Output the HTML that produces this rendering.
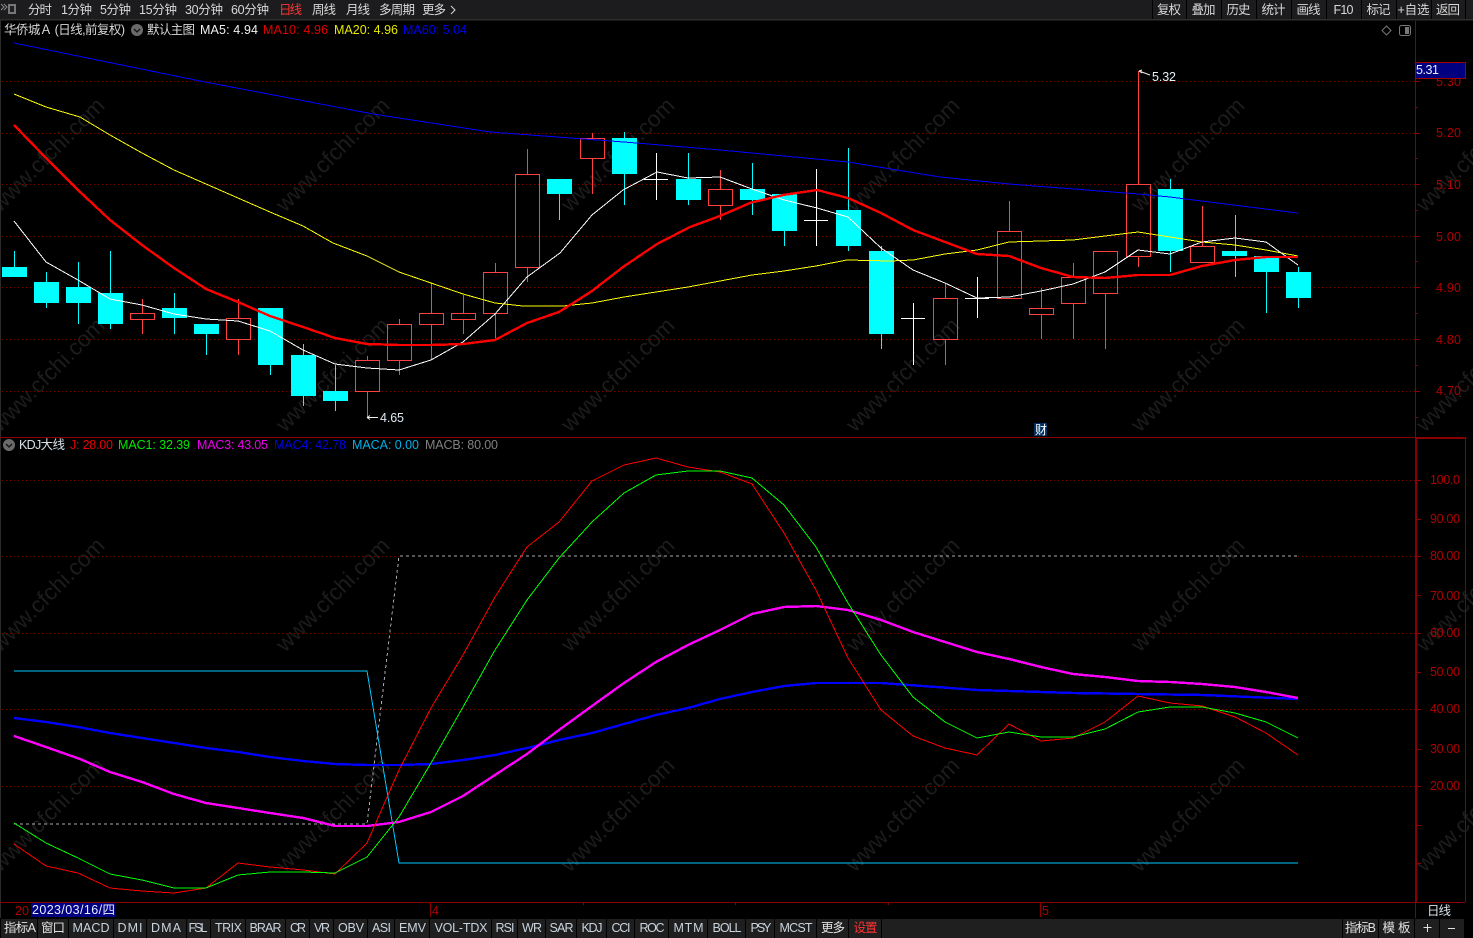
<!DOCTYPE html>
<html lang="zh"><head><meta charset="utf-8"><title>K线图</title>
<style>
html,body{margin:0;padding:0;background:#000;width:1473px;height:938px;overflow:hidden}
svg{display:block;position:absolute;left:0;top:0}
text{font-family:"Liberation Sans","Noto Sans CJK SC",sans-serif;font-size:12.5px}
.wm text{font-size:22.5px;fill:#1c1c1c}
.ax text{fill:#b00000}
.tb text{fill:#d8d8d8;text-anchor:middle}
.bb text{fill:#c9d3de;text-anchor:middle}
polyline{shape-rendering:crispEdges}
</style></head><body>
<svg width="1473" height="938" viewBox="0 0 1473 938" xmlns="http://www.w3.org/2000/svg">
<rect width="1473" height="938" fill="#000"/>
<g class="wm">
<text x="0" y="213" transform="rotate(-45 0 213)" textLength="150">www.cfchi.com</text>
<text x="285" y="213" transform="rotate(-45 285 213)" textLength="150">www.cfchi.com</text>
<text x="570" y="213" transform="rotate(-45 570 213)" textLength="150">www.cfchi.com</text>
<text x="855" y="213" transform="rotate(-45 855 213)" textLength="150">www.cfchi.com</text>
<text x="1140" y="213" transform="rotate(-45 1140 213)" textLength="150">www.cfchi.com</text>
<text x="1425" y="213" transform="rotate(-45 1425 213)" textLength="150">www.cfchi.com</text>
<text x="0" y="433" transform="rotate(-45 0 433)" textLength="150">www.cfchi.com</text>
<text x="285" y="433" transform="rotate(-45 285 433)" textLength="150">www.cfchi.com</text>
<text x="570" y="433" transform="rotate(-45 570 433)" textLength="150">www.cfchi.com</text>
<text x="855" y="433" transform="rotate(-45 855 433)" textLength="150">www.cfchi.com</text>
<text x="1140" y="433" transform="rotate(-45 1140 433)" textLength="150">www.cfchi.com</text>
<text x="1425" y="433" transform="rotate(-45 1425 433)" textLength="150">www.cfchi.com</text>
<text x="0" y="653" transform="rotate(-45 0 653)" textLength="150">www.cfchi.com</text>
<text x="285" y="653" transform="rotate(-45 285 653)" textLength="150">www.cfchi.com</text>
<text x="570" y="653" transform="rotate(-45 570 653)" textLength="150">www.cfchi.com</text>
<text x="855" y="653" transform="rotate(-45 855 653)" textLength="150">www.cfchi.com</text>
<text x="1140" y="653" transform="rotate(-45 1140 653)" textLength="150">www.cfchi.com</text>
<text x="1425" y="653" transform="rotate(-45 1425 653)" textLength="150">www.cfchi.com</text>
<text x="0" y="873" transform="rotate(-45 0 873)" textLength="150">www.cfchi.com</text>
<text x="285" y="873" transform="rotate(-45 285 873)" textLength="150">www.cfchi.com</text>
<text x="570" y="873" transform="rotate(-45 570 873)" textLength="150">www.cfchi.com</text>
<text x="855" y="873" transform="rotate(-45 855 873)" textLength="150">www.cfchi.com</text>
<text x="1140" y="873" transform="rotate(-45 1140 873)" textLength="150">www.cfchi.com</text>
<text x="1425" y="873" transform="rotate(-45 1425 873)" textLength="150">www.cfchi.com</text>
</g>

<!-- grid -->
<path d="M2 81.5H1415M2 133.5H1415M2 184.5H1415M2 236.5H1415M2 287.5H1415M2 339.5H1415M2 391.5H1415M2 480.5H1415M2 556.5H399M1298 556.5H1415M2 633.5H1415M2 709.5H1415M2 786.5H1415" stroke="#7a0000" stroke-width="1" stroke-dasharray="1 3" fill="none" shape-rendering="crispEdges"/>

<!-- frame -->
<path d="M0.5 20V918" stroke="#2c2c2c" fill="none" shape-rendering="crispEdges"/>
<path d="M0 437.5H1465M0 902.5H1465M1415.5 21V918M1465.5 437V902" stroke="#8a0000" fill="none" shape-rendering="crispEdges"/>
<path d="M1416.5 437V902M1415 438.5H1465" stroke="#8a0000" fill="none" shape-rendering="crispEdges"/>
<path d="M1415 81.5h5M1415 107.5h3M1415 133.5h5M1415 158.5h3M1415 184.5h5M1415 210.5h3M1415 236.5h5M1415 261.5h3M1415 287.5h5M1415 313.5h3M1415 339.5h5M1415 365.5h3M1415 391.5h5M1415 417.5h3M1415 480.5h6M1415 519.5h6M1415 556.5h6M1415 595.5h6M1415 633.5h6M1415 672.5h6M1415 709.5h6M1415 749.5h6M1415 786.5h6M1415 825.5h6M1415 863.5h6M583.5 902v3M735.5 902v3M888.5 902v3M430.5 903v14M1040.5 903v14" stroke="#8a0000" fill="none" shape-rendering="crispEdges"/>

<!-- axis labels -->
<g class="ax">
<text x="1436" y="86" textLength="25">5.30</text>
<text x="1436" y="137" textLength="25">5.20</text>
<text x="1436" y="189" textLength="25">5.10</text>
<text x="1436" y="241" textLength="25">5.00</text>
<text x="1436" y="292" textLength="25">4.90</text>
<text x="1436" y="344" textLength="25">4.80</text>
<text x="1436" y="395" textLength="25">4.70</text>
<text x="1430" y="484" textLength="30">100.0</text>
<text x="1430" y="523" textLength="30">90.00</text>
<text x="1430" y="560" textLength="30">80.00</text>
<text x="1430" y="600" textLength="30">70.00</text>
<text x="1430" y="637" textLength="30">60.00</text>
<text x="1430" y="676" textLength="30">50.00</text>
<text x="1430" y="713" textLength="30">40.00</text>
<text x="1430" y="753" textLength="30">30.00</text>
<text x="1430" y="790" textLength="30">20.00</text>
<text x="15" y="915" textLength="14">20</text>
<text x="432" y="915">4</text>
<text x="1042" y="915">5</text>
</g>
<rect x="1415.5" y="62.5" width="50" height="16" fill="#000080" stroke="#a00000" shape-rendering="crispEdges"/>
<text x="1416" y="74" fill="#e8ecff" textLength="23">5.31</text>

<!-- candles cyan -->
<path d="M14.5 251V267M46.5 272V308M78.5 262V324M110.5 251V329M174.5 293V334M206.5 334V355M270.5 365V375M303.5 344V406M335.5 365V411M559.5 194V220M624.5 132V205M688.5 153V205M752.5 163V215M784.5 231V246M848.5 148V251M881.5 246V349M1170.5 179V272M1235.5 215V277M1266.5 272V313M1298.5 267V308" stroke="#00ffff" fill="none" shape-rendering="crispEdges"/>
<g fill="#00ffff" shape-rendering="crispEdges">
<rect x="2" y="267" width="25" height="10"/>
<rect x="34" y="282" width="25" height="21"/>
<rect x="66" y="287" width="25" height="16"/>
<rect x="98" y="293" width="25" height="31"/>
<rect x="162" y="308" width="25" height="10"/>
<rect x="194" y="324" width="25" height="10"/>
<rect x="258" y="308" width="25" height="57"/>
<rect x="291" y="355" width="25" height="41"/>
<rect x="323" y="391" width="25" height="10"/>
<rect x="547" y="179" width="25" height="15"/>
<rect x="612" y="138" width="25" height="36"/>
<rect x="676" y="179" width="25" height="21"/>
<rect x="740" y="189" width="25" height="11"/>
<rect x="772" y="194" width="25" height="37"/>
<rect x="836" y="210" width="25" height="36"/>
<rect x="869" y="251" width="25" height="83"/>
<rect x="1158" y="189" width="25" height="62"/>
<rect x="1222" y="251" width="25" height="5"/>
<rect x="1254" y="256" width="25" height="16"/>
<rect x="1286" y="272" width="25" height="26"/>
</g>
<!-- candles white doji -->
<path d="M656.5 153V200M644 179.5H668M816.5 169V246M804 220.5H828M913.5 303V365M901 318.5H925M977.5 277V318M965 298.5H989" stroke="#fff" fill="none" shape-rendering="crispEdges"/>
<!-- candles red -->
<path d="M142.5 299V313M142.5 319V334M238.5 299V318M238.5 339V355M367.5 356V360M367.5 391V417M399.5 319V324M399.5 360V375M431.5 283V313M431.5 324V360M463.5 295V313M463.5 319V334M495.5 263V272M495.5 313V340M527.5 149V174M527.5 267V282M592.5 133V138M592.5 158V194M720.5 170V189M720.5 205V220M945.5 283V298M945.5 339V365M1009.5 201V231M1041.5 288V308M1041.5 314V339M1073.5 263V277M1073.5 303V339M1105.5 293V349M1138.5 71V184M1138.5 256V267M1202.5 206V246" stroke="#ff4040" fill="none" shape-rendering="crispEdges"/>
<g fill="none" stroke="#ff4040" shape-rendering="crispEdges">
<rect x="130.5" y="313.5" width="24" height="6"/>
<rect x="226.5" y="318.5" width="24" height="21"/>
<rect x="355.5" y="360.5" width="24" height="31"/>
<rect x="387.5" y="324.5" width="24" height="36"/>
<rect x="419.5" y="313.5" width="24" height="11"/>
<rect x="451.5" y="313.5" width="24" height="6"/>
<rect x="483.5" y="272.5" width="24" height="41"/>
<rect x="515.5" y="174.5" width="24" height="93"/>
<rect x="580.5" y="138.5" width="24" height="20"/>
<rect x="708.5" y="189.5" width="24" height="16"/>
<rect x="933.5" y="298.5" width="24" height="41"/>
<rect x="997.5" y="231.5" width="24" height="67"/>
<rect x="1029.5" y="308.5" width="24" height="6"/>
<rect x="1061.5" y="277.5" width="24" height="26"/>
<rect x="1093.5" y="251.5" width="24" height="42"/>
<rect x="1126.5" y="184.5" width="24" height="72"/>
<rect x="1190.5" y="246.5" width="24" height="16"/>
</g>

<!-- MA lines -->
<polyline fill="none" stroke="#0000ff" stroke-width="1" points="14,43 200,81 373,114 490,132 624,142 720,150 848,162 940,177 1009,184 1138,194 1170,197 1298,213"/>
<polyline fill="none" stroke="#ffff00" stroke-width="1" points="14,94 46,107 80,117 110,135 142,153 174,170 206,184 238,198 270,212 303,226 333,243 367,256 399,272 431,283 463,294 495,303 523,306 563,306 592,303 624,297 656,292 688,287 720,281 752,275 784,271 816,266 847,260 890,261 913,260 945,254 977,250 1009,242 1041,241 1073,240 1105,236 1138,232 1170,237 1202,242 1235,245 1266,250 1298,256"/>
<polyline fill="none" stroke="#ffffff" stroke-width="1" points="14,221 46,262 78,280 110,299 142,305 174,314 206,319 238,321 270,331 303,350 335,364 367,368 399,370 431,360 463,342 495,314 527,277 560,253 592,215 623,190 657,172 688,178 720,177 752,189 784,200 817,208 848,217 881,248 913,270 945,283 977,298 1009,297 1041,291 1073,284 1105,272 1138,250 1170,254 1202,242 1235,238 1266,242 1298,265"/>
<polyline fill="none" stroke="#ff0000" stroke-width="2.4" points="14,125 46,158 78,190 110,220 142,245 174,268 206,289 238,302 270,316 303,327 335,338 367,344 399,345 431,345 463,344 495,340 527,323 559,312 592,291 623,267 657,244 690,227 720,216 750,203 783,195 817,190 848,198 881,213 913,230 945,242 977,254 1009,256 1041,268 1073,277 1105,278 1138,275 1170,275 1202,266 1235,260 1266,257 1298,257"/>

<!-- annotations -->
<path d="M1139 71L1150 75M1139 71l3 -1M1139 71l3 2M367 417.5H378M367 417.5l3 -2M367 417.5l3 2" stroke="#eee" fill="none"/>
<text x="1152" y="81" fill="#e6eef6" textLength="24">5.32</text>
<text x="380" y="422" fill="#dde8f4" textLength="24">4.65</text>
<rect x="1034" y="423" width="13" height="13" fill="#002f60"/>
<text x="1035" y="434" fill="#fff" style="font-size:12px">财</text>

<!-- KDJ lines -->
<polyline fill="none" stroke="#aaaaaa" stroke-width="1" stroke-dasharray="3 3" points="14,824 367,824 399,556 1298,556"/>
<polyline fill="none" stroke="#00c8ff" stroke-width="1" points="14,671 367,671 399,863 1298,863"/>
<polyline fill="none" stroke="#0000ff" stroke-width="2.4" points="14,718 46,722 78,727 110,733 142,738 174,743 206,748 238,752 270,757 303,761 335,764 367,765 399,765 431,764 463,760 495,755 527,748 559,740 592,733 624,724 656,715 688,708 720,699 752,692 784,686 816,683 848,683 881,683 950,688 977,690 1073,693 1202,695 1298,699"/>
<polyline fill="none" stroke="#ff00ff" stroke-width="2.4" points="14,736 46,747 80,759 110,772 142,782 174,794 206,803 238,808 270,813 303,818 335,826 367,826 399,822 431,812 463,796 495,775 527,754 559,730 592,706 624,683 656,662 688,645 720,630 752,614 784,607 816,606 848,610 881,620 913,632 945,642 977,652 1009,659 1041,667 1073,674 1105,677 1138,681 1170,682 1202,684 1235,687 1266,692 1298,698"/>
<polyline fill="none" stroke="#ff0000" stroke-width="1" points="14,844 46,866 78,873 110,888 142,891 174,893 206,888 238,863 270,867 303,870 335,874 367,843 399,770 431,708 463,655 495,597 527,547 559,522 592,481 624,465 656,458 688,467 720,472 752,484 784,533 816,590 848,658 881,710 913,736 945,748 977,755 1009,724 1041,741 1073,738 1105,722 1138,696 1170,703 1202,706 1235,717 1266,733 1298,755"/>
<polyline fill="none" stroke="#00ff00" stroke-width="1" points="14,823 46,843 78,858 110,874 142,880 174,888 206,888 238,875 270,872 303,872 335,873 367,857 399,817 431,763 463,707 495,650 527,600 559,558 592,522 624,493 656,475 688,471 720,471 752,478 784,505 816,547 848,603 881,655 913,697 945,722 977,738 1009,732 1041,737 1073,737 1105,729 1138,712 1170,707 1202,707 1235,713 1266,722 1298,738"/>

<!-- header legend -->
<text x="4" y="34" fill="#d8d8d8" textLength="121">华侨城Ａ (日线,前复权)</text>
<circle cx="137" cy="30" r="6" fill="#6a6a6a"/><path d="M134 29l3 3 3-3" stroke="#111" stroke-width="1.3" fill="none"/>
<text x="147" y="34" fill="#d8d8d8" textLength="48">默认主图</text>
<text x="200" y="34" fill="#f0f0f0" textLength="58">MA5: 4.94</text>
<text x="263" y="34" fill="#e00000" textLength="65">MA10: 4.96</text>
<text x="334" y="34" fill="#e8e800" textLength="64">MA20: 4.96</text>
<text x="403" y="34" fill="#0000e8" textLength="64">MA60: 5.04</text>
<path d="M1386.5 26l4.500 4.500-4.500 4.500-4.500-4.500z" stroke="#777" fill="none"/>
<rect x="1399.5" y="25.5" width="11" height="10" rx="2" fill="#000" stroke="#777"/><rect x="1405" y="27" width="4" height="7" fill="#777"/>

<circle cx="9" cy="445" r="6" fill="#6a6a6a"/><path d="M6 444l3 3 3-3" stroke="#111" stroke-width="1.3" fill="none"/>
<text x="19" y="449" fill="#d8e0e8" textLength="46">KDJ大线</text>
<text x="70" y="449" fill="#e80000" textLength="43">J: 28.00</text>
<text x="118" y="449" fill="#00e800" textLength="72">MAC1: 32.39</text>
<text x="197" y="449" fill="#e800e8" textLength="71">MAC3: 43.05</text>
<text x="274" y="449" fill="#0000e8" textLength="72">MAC4: 42.78</text>
<text x="352" y="449" fill="#00b0e8" textLength="67">MACA: 0.00</text>
<text x="425" y="449" fill="#808080" textLength="73">MACB: 80.00</text>

<!-- top toolbar -->
<rect x="0" y="0" width="1473" height="19" fill="#1c1c1e"/>
<rect x="0" y="19" width="1473" height="1.500" fill="#2e2e2e"/>
<path d="M1 4l3 3-3 3M4 4l3 3-3 3" stroke="#888" fill="none"/><rect x="8" y="4" width="8" height="10" fill="#777"/><rect x="10" y="6" width="4" height="6" fill="#222"/>
<g class="tb">
<text x="40" y="14" textLength="24">分时</text>
<text x="76.500" y="14" textLength="31">1分钟</text>
<text x="115.500" y="14" textLength="31">5分钟</text>
<text x="158" y="14" textLength="38">15分钟</text>
<text x="204" y="14" textLength="38">30分钟</text>
<text x="250" y="14" textLength="38">60分钟</text>
<text x="290.500" y="14" textLength="23" style="fill:#ff3333">日线</text>
<text x="324" y="14" textLength="24">周线</text>
<text x="358" y="14" textLength="24">月线</text>
<text x="397" y="14" textLength="36">多周期</text>
<text x="434" y="14" textLength="24">更多</text>
</g>
<path d="M451 6l4 4-4 4" stroke="#d8d8d8" fill="none"/>
<g fill="#000" shape-rendering="crispEdges">
<rect x="1152" y="0" width="1" height="19"/><rect x="1186" y="0" width="1" height="19"/><rect x="1221" y="0" width="1" height="19"/><rect x="1256" y="0" width="1" height="19"/><rect x="1291" y="0" width="1" height="19"/><rect x="1326" y="0" width="1" height="19"/><rect x="1361" y="0" width="1" height="19"/><rect x="1396" y="0" width="1" height="19"/><rect x="1431" y="0" width="1" height="19"/><rect x="1465" y="0" width="1" height="19"/>
</g>
<g class="tb">
<text x="1169" y="14" textLength="24">复权</text>
<text x="1203.500" y="14" textLength="24">叠加</text>
<text x="1238.500" y="14" textLength="24">历史</text>
<text x="1273.500" y="14" textLength="24">统计</text>
<text x="1308.500" y="14" textLength="24">画线</text>
<text x="1343.500" y="14" textLength="20">F10</text>
<text x="1378.500" y="14" textLength="24">标记</text>
<text x="1413.500" y="14" textLength="32">+自选</text>
<text x="1448" y="14" textLength="24">返回</text>
</g>

<!-- date row -->
<rect x="31" y="903" width="84" height="14" fill="#000080"/>
<text x="32" y="914" fill="#e8ecff" textLength="83">2023/03/16/四</text>
<text x="1427" y="915" fill="#d8e0e8" textLength="24">日线</text>

<!-- bottom bar -->
<rect x="0" y="919" width="1465" height="19" fill="#1f1f1f"/>
<path d="M0.500 919v19M37.500 919v19M68.500 919v19M113.500 919v19M146.500 919v19M186.500 919v19M210.500 919v19M245.500 919v19M285.500 919v19M309.500 919v19M333.500 919v19M367.500 919v19M394.500 919v19M429.500 919v19M491.500 919v19M517.500 919v19M545.500 919v19M576.500 919v19M606.500 919v19M634.500 919v19M668.500 919v19M707.500 919v19M745.500 919v19M774.500 919v19M816.500 919v19M848.500 919v19M881.500 919v19M1342.500 919v19M1378.500 919v19M1414.500 919v19M1439.500 919v19M1464.500 919v19" stroke="#000" fill="none" shape-rendering="crispEdges"/>
<g class="bb">
<text x="20" y="932" textLength="32" style="fill:#e0e0e0">指标A</text>
<text x="53" y="932" textLength="24" style="fill:#e0e0e0">窗口</text>
<text x="91" y="932" textLength="37">MACD</text>
<text x="130" y="932" textLength="25">DMI</text>
<text x="166" y="932" textLength="30">DMA</text>
<text x="198" y="932" textLength="19">FSL</text>
<text x="228.500" y="932" textLength="27">TRIX</text>
<text x="265.500" y="932" textLength="32">BRAR</text>
<text x="298" y="932" textLength="16">CR</text>
<text x="322" y="932" textLength="16">VR</text>
<text x="351" y="932" textLength="26">OBV</text>
<text x="381.500" y="932" textLength="19">ASI</text>
<text x="412.500" y="932" textLength="27">EMV</text>
<text x="461" y="932" textLength="53">VOL-TDX</text>
<text x="505" y="932" textLength="19">RSI</text>
<text x="532" y="932" textLength="20">WR</text>
<text x="561.500" y="932" textLength="24">SAR</text>
<text x="592" y="932" textLength="21">KDJ</text>
<text x="621" y="932" textLength="19">CCI</text>
<text x="652" y="932" textLength="25">ROC</text>
<text x="688.500" y="932" textLength="30">MTM</text>
<text x="727" y="932" textLength="29">BOLL</text>
<text x="761" y="932" textLength="21">PSY</text>
<text x="796" y="932" textLength="33">MCST</text>
<text x="833" y="932" textLength="24" style="fill:#e0e0e0">更多</text>
<text x="865.500" y="932" textLength="24" style="fill:#ff3333">设置</text>
<text x="1360.500" y="932" textLength="31" style="fill:#e0e0e0">指标B</text>
<text x="1396.500" y="932" textLength="28" style="fill:#e0e0e0">模 板</text>
</g>
<path d="M1423.500 927.500h8M1427.500 924v8M1448 928.500h7" stroke="#e0e0e0" fill="none" shape-rendering="crispEdges"/>
</svg>
</body></html>
